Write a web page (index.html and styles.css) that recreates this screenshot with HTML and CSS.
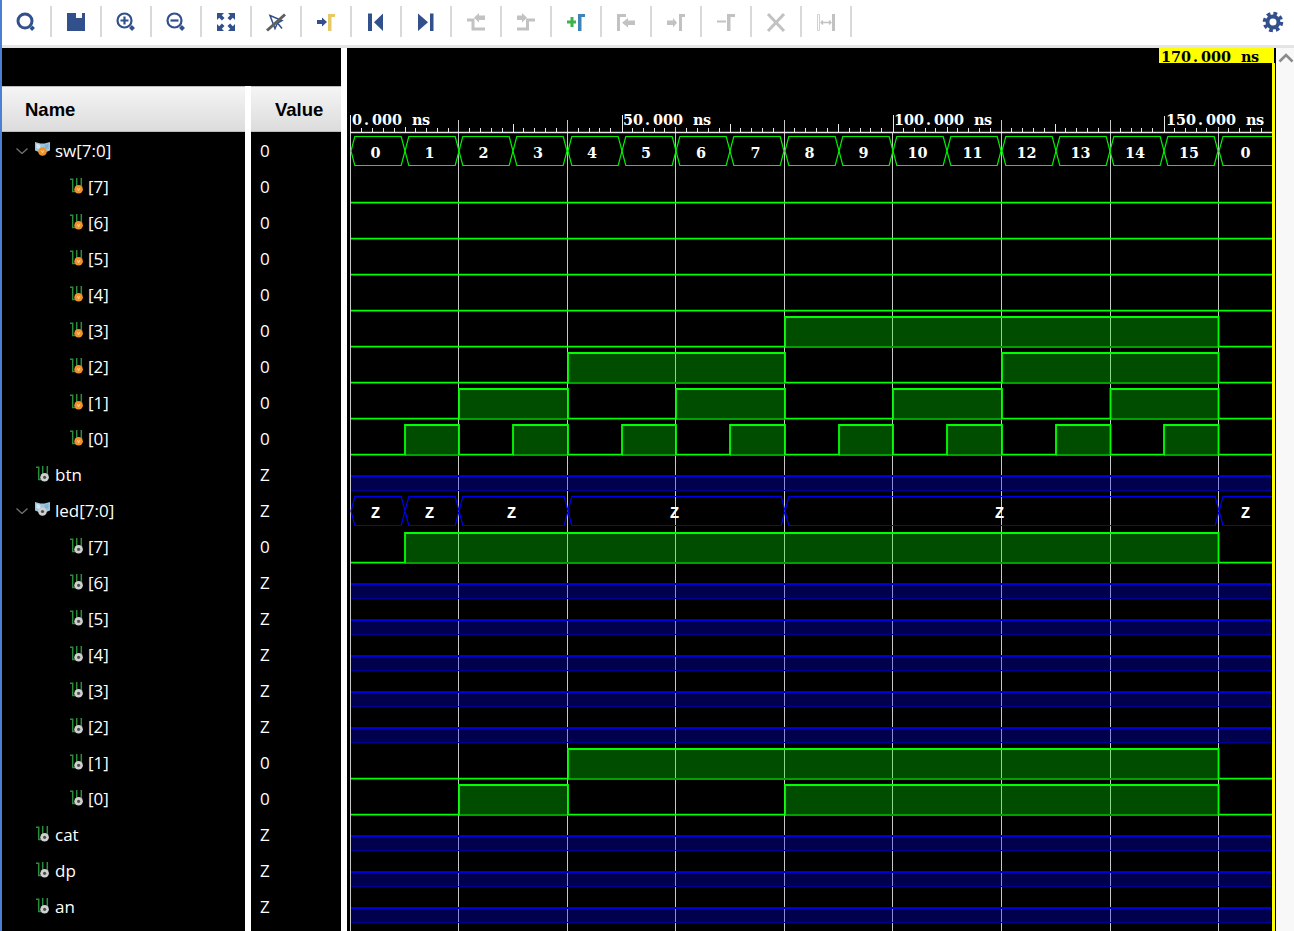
FILE: index.html
```html
<!DOCTYPE html>
<html lang="en">
<head>
<meta charset="utf-8">
<title>Waveform</title>
<link rel="stylesheet" href="styles.css">
</head>
<body>
<svg class="defs" width="0" height="0" aria-hidden="true">
  <symbol id="bit-o" viewBox="0 0 14 16">
    <path class="ic-wire" d="M0 1.200H2.700V13.600H6M6.700 0V10M11.300 0V10"/>
    <circle cx="8.600" cy="11.300" r="4.300" fill="#f0922b"/>
    <path d="M7.400 10.200l1.200 2.300 1.200-2.300" fill="none" stroke="#ffe6b0" stroke-width=".9"/>
  </symbol>
  <symbol id="bit-g" viewBox="0 0 14 16">
    <path class="ic-wire" d="M0 1.200H2.700V13.600H6M6.700 0V10M11.300 0V10"/>
    <circle cx="8.600" cy="11.300" r="4.300" fill="#cfcfcf"/>
    <circle cx="8.600" cy="11.300" r="1.600" fill="#4d4d4d"/>
  </symbol>
  <symbol id="bus-o" viewBox="0 0 16 16">
    <path d="M0 1l5.500 1.500h4L15 1v8.500l-7.500 3-7.500-3z" fill="#9cc6de"/>
    <path d="M1.500 2.800l4 1.200-.5 4.500-3.500-1.500z" fill="#d4e5ef"/>
    <path d="M13.500 2.800l-4 1.200.5 4.500 3.500-1.500z" fill="#7fb3d2"/>
    <circle cx="7.500" cy="10.500" r="4.300" fill="#f0922b"/>
    <path d="M6.300 9.400l1.200 2.300 1.200-2.300" fill="none" stroke="#ffe6b0" stroke-width=".9"/>
  </symbol>
  <symbol id="bus-g" viewBox="0 0 16 16">
    <path d="M0 1l5.500 1.500h4L15 1v8.500l-7.500 3-7.500-3z" fill="#9cc6de"/>
    <path d="M1.500 2.800l4 1.200-.5 4.500-3.500-1.500z" fill="#d4e5ef"/>
    <path d="M13.500 2.800l-4 1.200.5 4.500 3.500-1.500z" fill="#7fb3d2"/>
    <circle cx="7.500" cy="10.500" r="4.300" fill="#cfcfcf"/>
    <circle cx="7.500" cy="10.500" r="1.600" fill="#4d4d4d"/>
  </symbol>
  <symbol id="chev" viewBox="0 0 12 6">
    <path d="M.5 .5L6 5.500 11.500 .5" fill="none" stroke="#6e6e6e" stroke-width="1.400"/>
  </symbol>
  <symbol id="hex" viewBox="0 0 54 30" overflow="visible">
    <path d="M0 15L3.800 .5H50.200L54 15 50.200 29.500H3.800Z"/>
  </symbol>
</svg>

<div class="app">
  <header class="toolbar">
    <div class="tool"><svg viewBox="0 0 24 24"><circle class="s-navy w3" cx="11" cy="11" r="7"/><path class="s-navy w4" d="M17 17l2.500 2.500"/></svg></div>
    <div class="tool"><svg viewBox="0 0 24 24"><path class="f-navy" fill-rule="evenodd" d="M3 3H21V21H3ZM12 3V8H18V3Z"/></svg></div>
    <div class="tool"><svg viewBox="0 0 24 24"><circle class="s-navy w2" cx="10.500" cy="10.500" r="7"/><path class="s-navy w2" d="M6.500 10.500H14.500M10.500 6.500V14.500"/><path class="s-navy w4" d="M16.500 16.500l3 3"/></svg></div>
    <div class="tool"><svg viewBox="0 0 24 24"><circle class="s-navy w2" cx="10.500" cy="10.500" r="7"/><path class="s-navy w2" d="M6.500 10.500H14.500"/><path class="s-navy w4" d="M16.500 16.500l3 3"/></svg></div>
    <div class="tool"><svg viewBox="0 0 24 24"><path class="f-navy" d="M3 3H10L7.800 5.200 10.500 7.900 7.900 10.500 5.200 7.800 3 10ZM21 3V10L18.800 7.800 16.100 10.500 13.500 7.900 16.200 5.200 14 3ZM3 21V14L5.200 16.200 7.900 13.500 10.500 16.100 7.800 18.800 10 21ZM21 21H14L16.200 18.800 13.500 16.100 16.100 13.500 18.800 16.200 21 14Z"/></svg></div>
    <div class="tool"><svg viewBox="0 0 24 24"><path class="s-navy w15" d="M6 5.500L18 10.500 13.500 13 11 18.500ZM13.500 13L18 18.500"/><path class="s-slash" d="M3 20.500L21 4.500"/></svg></div>
    <div class="tool"><svg viewBox="0 0 24 24"><path class="f-navy" d="M3 10H8V7.500L13 12 8 16.500V14H3Z"/><path class="f-gold" d="M14 4H21V7H17.500V21H14Z"/></svg></div>
    <div class="tool"><svg viewBox="0 0 24 24"><path class="f-navy" d="M4 3.500H8V21H4ZM19 3.500V21L10 12.300Z"/></svg></div>
    <div class="tool"><svg viewBox="0 0 24 24"><path class="f-navy" d="M4 3.500L14 12.300 4 21ZM16 3.500H19.500V21H16Z"/></svg></div>
    <div class="tool"><svg viewBox="0 0 24 24"><path class="s-grey w3" d="M3 10H9V19H21"/><path class="f-grey" d="M21 5.500V10H15V12.500L10 7.700 15 3V5.500Z"/></svg></div>
    <div class="tool"><svg viewBox="0 0 24 24"><path class="s-grey w3" d="M3 19H13.500V10H21"/><path class="f-grey" d="M3 5.500H8V3L13 7.700 8 12.500V10H3Z"/></svg></div>
    <div class="tool"><svg viewBox="0 0 24 24"><path class="f-green" d="M3 10.500H6.500V7H9.500V10.500H12V13.500H9.500V17H6.500V13.500H3Z"/><path class="f-blue" d="M14 4H21V7H17.500V21H14Z"/></svg></div>
    <div class="tool"><svg viewBox="0 0 24 24"><path class="f-grey" d="M3 4H12V7H6V21H3ZM21 10.500V15H14V17.500L8 12.800 14 8V10.500Z"/></svg></div>
    <div class="tool"><svg viewBox="0 0 24 24"><path class="f-grey" d="M3 10.500H9V8L13 12.800 9 17.500V15H3ZM15 4H21V7H18V21H15Z"/></svg></div>
    <div class="tool"><svg viewBox="0 0 24 24"><path class="f-grey" d="M3 10.500H12V12.500H3ZM13 4H21V7H16.500V21H13Z"/></svg></div>
    <div class="tool"><svg viewBox="0 0 24 24"><path class="s-grey w3" d="M4 4L20 21M20 4L4 21"/></svg></div>
    <div class="tool"><svg viewBox="0 0 24 24"><path class="s-pale" d="M3.500 4.500H5.500V20.500H3.500Z"/><path class="f-grey" d="M18 4H21V21H18Z"/><path class="s-grey w1" d="M7 12.500H17M9 10.500L7 12.500 9 14.500M15 10.500L17 12.500 15 14.500"/></svg></div>
    <div class="gear"><svg viewBox="0 0 24 24"><circle class="s-navy w4" cx="12" cy="12" r="5.500"/><circle class="s-teeth" cx="12" cy="12" r="8.500"/></svg></div>
  </header>

  <main class="main">
    <section class="names">
      <div class="top-strip"></div>
      <div class="col col-name">
        <div class="head">Name</div>
        <div class="rows">
          <div class="row bus"><svg class="chev"><use href="#chev"/></svg><svg class="ic-bus"><use href="#bus-o"/></svg><span>sw[7:0]</span></div>
          <div class="row child"><svg class="ic-bit"><use href="#bit-o"/></svg><span>[7]</span></div>
          <div class="row child"><svg class="ic-bit"><use href="#bit-o"/></svg><span>[6]</span></div>
          <div class="row child"><svg class="ic-bit"><use href="#bit-o"/></svg><span>[5]</span></div>
          <div class="row child"><svg class="ic-bit"><use href="#bit-o"/></svg><span>[4]</span></div>
          <div class="row child"><svg class="ic-bit"><use href="#bit-o"/></svg><span>[3]</span></div>
          <div class="row child"><svg class="ic-bit"><use href="#bit-o"/></svg><span>[2]</span></div>
          <div class="row child"><svg class="ic-bit"><use href="#bit-o"/></svg><span>[1]</span></div>
          <div class="row child"><svg class="ic-bit"><use href="#bit-o"/></svg><span>[0]</span></div>
          <div class="row single"><svg class="ic-bit"><use href="#bit-g"/></svg><span>btn</span></div>
          <div class="row bus"><svg class="chev"><use href="#chev"/></svg><svg class="ic-bus"><use href="#bus-g"/></svg><span>led[7:0]</span></div>
          <div class="row child"><svg class="ic-bit"><use href="#bit-g"/></svg><span>[7]</span></div>
          <div class="row child"><svg class="ic-bit"><use href="#bit-g"/></svg><span>[6]</span></div>
          <div class="row child"><svg class="ic-bit"><use href="#bit-g"/></svg><span>[5]</span></div>
          <div class="row child"><svg class="ic-bit"><use href="#bit-g"/></svg><span>[4]</span></div>
          <div class="row child"><svg class="ic-bit"><use href="#bit-g"/></svg><span>[3]</span></div>
          <div class="row child"><svg class="ic-bit"><use href="#bit-g"/></svg><span>[2]</span></div>
          <div class="row child"><svg class="ic-bit"><use href="#bit-g"/></svg><span>[1]</span></div>
          <div class="row child"><svg class="ic-bit"><use href="#bit-g"/></svg><span>[0]</span></div>
          <div class="row single"><svg class="ic-bit"><use href="#bit-g"/></svg><span>cat</span></div>
          <div class="row single"><svg class="ic-bit"><use href="#bit-g"/></svg><span>dp</span></div>
          <div class="row single"><svg class="ic-bit"><use href="#bit-g"/></svg><span>an</span></div>
        </div>
      </div>
      <div class="col col-value">
        <div class="head head-value">Value</div>
        <div class="rows">
          <div class="row val">0</div><div class="row val">0</div><div class="row val">0</div><div class="row val">0</div><div class="row val">0</div><div class="row val">0</div><div class="row val">0</div><div class="row val">0</div><div class="row val">0</div>
          <div class="row val">Z</div><div class="row val">Z</div><div class="row val">0</div>
          <div class="row val">Z</div><div class="row val">Z</div><div class="row val">Z</div><div class="row val">Z</div><div class="row val">Z</div>
          <div class="row val">0</div><div class="row val">0</div>
          <div class="row val">Z</div><div class="row val">Z</div><div class="row val">Z</div>
        </div>
      </div>
    </section>

    <section class="wave">
      <svg class="canvas" viewBox="347 48 929 883" width="929" height="883">
        <!-- grid -->
        <path class="grid" d="M350.500 132V931M458.500 120V931M567.500 120V931M675.500 127V931M784.500 120V931M892.500 132V931M1001.500 120V931M1110.500 120V931M1218.500 127V931"/>
        <!-- ruler -->
        <path class="rule" d="M350 132.500H1272"/>
        <path class="tick" d="M350.500 115V132M622.500 115V132M893.500 115V132M1164.500 116V132M405.500 127V132M513.500 124V132M730.500 124V132M838.500 124V132M947.500 127V132M1055.500 124V132"/>
        <path class="tick" d="M361.500 128v4M372.500 128v4M383.500 128v4M394.500 128v4M415.500 128v4M426.500 128v4M437.500 128v4M448.500 128v4M469.500 128v4M480.500 128v4M491.500 128v4M502.500 128v4M523.500 128v4M534.500 128v4M545.500 128v4M556.500 128v4M578.500 128v4M589.500 128v4M599.500 128v4M610.500 128v4M632.500 128v4M643.500 128v4M654.500 128v4M664.500 128v4M686.500 128v4M697.500 128v4M708.500 128v4M719.500 128v4M740.500 128v4M751.500 128v4M762.500 128v4M773.500 128v4M794.500 128v4M805.500 128v4M816.500 128v4M827.500 128v4M849.500 128v4M860.500 128v4M870.500 128v4M881.500 128v4M903.500 128v4M914.500 128v4M925.500 128v4M935.500 128v4M957.500 128v4M968.500 128v4M979.500 128v4M990.500 128v4M1011.500 128v4M1022.500 128v4M1033.500 128v4M1044.500 128v4M1065.500 128v4M1076.500 128v4M1087.500 128v4M1098.500 128v4M1120.500 128v4M1131.500 128v4M1141.500 128v4M1152.500 128v4M1174.500 128v4M1185.500 128v4M1196.500 128v4M1206.500 128v4M1228.500 128v4M1239.500 128v4M1250.500 128v4M1261.500 128v4"/>
        <text class="time" y="125" x="352 364 372 382 392 402 412 422">0.000 ns</text>
        <text class="time" y="125" x="623 633 645 653 663 673 683 693 703">50.000 ns</text>
        <text class="time" y="125" x="894 904 914 926 934 944 954 964 974 984">100.000 ns</text>
        <text class="time" y="125" x="1166 1176 1186 1198 1206 1216 1226 1236 1246 1256">150.000 ns</text>

        <!-- sw bus -->
        <g class="hex-g">
          <use href="#hex" x="351" y="136" width="54" height="30"/><use href="#hex" x="405" y="136" width="54" height="30"/><use href="#hex" x="459" y="136" width="54" height="30"/><use href="#hex" x="513" y="136" width="54" height="30"/>
          <use href="#hex" x="568" y="136" width="54" height="30"/><use href="#hex" x="622" y="136" width="54" height="30"/><use href="#hex" x="676" y="136" width="54" height="30"/><use href="#hex" x="730" y="136" width="54" height="30"/>
          <use href="#hex" x="785" y="136" width="54" height="30"/><use href="#hex" x="839" y="136" width="54" height="30"/><use href="#hex" x="893" y="136" width="54" height="30"/><use href="#hex" x="947" y="136" width="54" height="30"/>
          <use href="#hex" x="1002" y="136" width="54" height="30"/><use href="#hex" x="1056" y="136" width="54" height="30"/><use href="#hex" x="1110" y="136" width="54" height="30"/><use href="#hex" x="1164" y="136" width="54" height="30"/>
          <path d="M1272 136.500H1223L1219 151 1223 165.500H1272"/>
        </g>
        <g class="bus-t">
          <text x="375.500" y="158">0</text><text x="429.500" y="158">1</text><text x="483.500" y="158">2</text><text x="538" y="158">3</text><text x="592" y="158">4</text><text x="646" y="158">5</text><text x="701" y="158">6</text><text x="755.500" y="158">7</text><text x="809.500" y="158">8</text><text x="863.500" y="158">9</text><text x="917.500" y="158">10</text><text x="972.500" y="158">11</text><text x="1026.500" y="158">12</text><text x="1080.500" y="158">13</text><text x="1135" y="158">14</text><text x="1189" y="158">15</text><text x="1245.500" y="158">0</text>
        </g>

        <!-- high fill -->
        <path class="hi" d="M785 316H1218.500V346H785ZM568 352H785V382H568ZM1002 352H1218.500V382H1002ZM459 388H568V418H459ZM676 388H785V418H676ZM893 388H1002V418H893ZM1110.500 388H1218.500V418H1110.500ZM405 424H459V454H405ZM513 424H568V454H513ZM622 424H676V454H622ZM730 424H785V454H730ZM839 424H893V454H839ZM947 424H1002V454H947ZM1056 424H1110.500V454H1056ZM1164 424H1218.500V454H1164ZM405 532H1218.500V562H405ZM568 748H1218.500V778H568ZM459 784H568V814H459ZM785 784H1218.500V814H785Z"/>
        <!-- bottom edges of high levels -->
        <path class="hi-b" d="M785 347H1218.500M568 383H785M1002 383H1218.500M459 419H568M676 419H785M893 419H1002M1110.500 419H1218.500M405 455H459M513 455H568M622 455H676M730 455H785M839 455H893M947 455H1002M1056 455H1110.500M1164 455H1218.500M405 563H1218.500M568 779H1218.500M459 815H568M785 815H1218.500"/>
        <!-- bit levels -->
        <path class="lvl" d="M351 202.700H1272M351 238.700H1272M351 274.700H1272M351 310.700H1272
          M351 346.700H785V317H1218.500V346.700H1272
          M351 382.700H568V353H785V382.700H1002V353H1218.500V382.700H1272
          M351 418.700H459V389H568V418.700H676V389H785V418.700H893V389H1002V418.700H1110.500V389H1218.500V418.700H1272
          M351 454.700H405V425H459V454.700H513V425H568V454.700H622V425H676V454.700H730V425H785V454.700H839V425H893V454.700H947V425H1002V454.700H1056V425H1110.500V454.700H1164V425H1218.500V454.700H1272
          M351 562.700H405V533H1218.500V562.700H1272
          M351 778.700H568V749H1218.500V778.700H1272
          M351 814.700H459V785H568V814.700H785V785H1218.500V814.700H1272"/>
        <!-- hi-Z bands -->
        <path class="z" d="M351 476H1271V491H351ZM351 584H1271V599H351ZM351 620H1271V635H351ZM351 656H1271V671H351ZM351 692H1271V707H351ZM351 728H1271V743H351ZM351 836H1271V851H351ZM351 872H1271V887H351ZM351 908H1271V923H351Z"/>
        <path class="z-t" d="M351 476H1271M351 584H1271M351 620H1271M351 656H1271M351 692H1271M351 728H1271M351 836H1271M351 872H1271M351 908H1271"/>
        <path class="z-b" d="M351 490.500H1271M351 598.500H1271M351 634.500H1271M351 670.500H1271M351 706.500H1271M351 742.500H1271M351 850.500H1271M351 886.500H1271M351 922.500H1271"/>

        <!-- led bus -->
        <path class="hex-b" d="M351 511L354.800 496.500H401.200L405 511 401.200 525.500H354.800ZM405 511L408.800 496.500H455.200L459 511 455.200 525.500H408.800ZM459 511L462.800 496.500H564.200L568 511 564.200 525.500H462.800ZM568 511L571.800 496.500H781.200L785 511 781.200 525.500H571.800ZM785 511L788.800 496.500H1215.200L1219 511 1215.200 525.500H788.800ZM1272 496.500H1223L1219 511 1223 525.500H1272"/>
        <g class="bus-z">
          <text x="375.500" y="518">Z</text><text x="429.500" y="518">Z</text><text x="511.500" y="518">Z</text><text x="674.500" y="518">Z</text><text x="999.500" y="518">Z</text><text x="1245.500" y="518">Z</text>
        </g>

        <!-- cursor -->
        <rect class="cursor" x="1272" y="63" width="3" height="868"/>
        <rect class="cursor" x="1159" y="48" width="115" height="15"/>
        <text class="time time-dark" y="62" x="1161 1171 1181 1193 1201 1211 1221 1231 1241 1251">170.000 ns</text>
      </svg>
    </section>

    <aside class="scroller"><svg viewBox="0 0 16 10"><path d="M1.500 8.500L8 2l6.500 6.500" fill="none" stroke="#8a8a8a" stroke-width="2.600"/></svg></aside>
  </main>
</div>
</body>
</html>
```
FILE: styles.css
```css
* { box-sizing: border-box; }
html, body { margin: 0; padding: 0; height: 931px; overflow: hidden; background: #fff; }
.defs { position: absolute; }

.app {
  width: 1294px;
  height: 931px;
  display: flex;
  flex-direction: column;
  border-left: 2px solid #4a7fd4;
}

.toolbar {
  height: 48px;
  flex: none;
  display: flex;
  align-items: flex-start;
  background: #fff;
  border-bottom: 3px solid #e4e4e4;
}
.tool {
  width: 50px;
  height: 45px;
  flex: none;
  position: relative;
  display: flex;
  align-items: center;
  justify-content: center;
  padding-right: 2px;
}
.tool::after {
  content: "";
  position: absolute;
  right: 0;
  top: 6px;
  width: 2px;
  height: 31px;
  background: #d9d9d9;
}
.tool svg { width: 24px; height: 24px; margin-top: -2px; }
.gear { margin-left: 409px; width: 24px; height: 24px; margin-top: 10px; }
.gear svg { width: 24px; height: 24px; display: block; }

.f-navy { fill: #31508c; }
.f-gold { fill: #e6c867; }
.f-grey { fill: #c2c2c2; }
.f-green { fill: #3cb44b; }
.f-blue { fill: #3f84b9; }
.s-navy, .s-grey, .s-slash, .s-teeth, .s-pale { fill: none; }
.s-navy { stroke: #31508c; }
.s-grey { stroke: #c2c2c2; }
.s-pale { stroke: #d2d2d2; stroke-width: 1; }
.s-slash { stroke: #5f5f5f; stroke-width: 3; }
.s-teeth { stroke: #31508c; stroke-width: 3.5; stroke-dasharray: 3.7 3; }
.w1 { stroke-width: 1.3; }
.w15 { stroke-width: 1.5; }
.w2 { stroke-width: 2.2; }
.w3 { stroke-width: 3; }
.w4 { stroke-width: 4; }

.main {
  flex: 1;
  min-height: 0;
  display: flex;
}

.names {
  width: 339px;
  flex: none;
  display: grid;
  grid-template-columns: 243px 90px;
  grid-template-rows: 38px 1fr;
  column-gap: 6px;
}
.top-strip { grid-column: 1 / 3; background: #000; }
.col { background: #000; overflow: hidden; }

.head {
  height: 46px;
  padding: 2px 0 0 23px;
  display: flex;
  align-items: center;
  font: bold 18.5px "Liberation Sans", Arial, sans-serif;
  color: #000;
  background: linear-gradient(#f5f5f5, #dcdcdc);
  border: 1px solid #bdbdbd;
  border-width: 1px 0 1px 0;
}
.head-value { padding-left: 24px; }

.row {
  height: 36px;
  display: flex;
  align-items: center;
  font: 17px "Open Sans", "Noto Sans", sans-serif;
  color: #fff;
}
.bus { padding-left: 14px; }
.single { padding-left: 34px; }
.child { padding-left: 68px; }
.val { padding-left: 9px; }

.chev { width: 12px; height: 6px; margin: 2px 7px 0 0; flex: none; }
.ic-bus { width: 16px; height: 16px; margin: -2px 4px 0 0; flex: none; }
.ic-bit { width: 14px; height: 16px; margin: 0 4px 0 0; flex: none; }
.single .ic-bit { margin-right: 5px; }
.ic-wire { fill: none; stroke: #2b8c3c; stroke-width: 1.5; }

.wave {
  width: 929px;
  flex: none;
  margin-left: 6px;
  background: #000;
}
.canvas { display: block; }

.grid { stroke: #c8c8c8; stroke-width: 1; fill: none; }
.rule { stroke: #e8e8e8; stroke-width: 1.4; fill: none; }
.tick { stroke: #e8e8e8; stroke-width: 1; fill: none; }
.time {
  font: bold 14.4px "DejaVu Serif", "Liberation Serif", serif;
  fill: #fff;
}
.time-dark { fill: #000; }
.bus-t text {
  font: bold 14.4px "DejaVu Serif", "Liberation Serif", serif;
  fill: #fff;
  text-anchor: middle;
}
.bus-z text {
  font: bold 16px "Liberation Mono", monospace;
  fill: #fff;
  text-anchor: middle;
}

.hex-g, .hex-g path { fill: none; stroke: #00f000; stroke-width: 1.2; }
.hex-b { fill: none; stroke: #0000f0; stroke-width: 1.2; }
.hi { fill: rgba(0, 255, 0, 0.3); }
.hi-b { fill: none; stroke: #00a000; stroke-width: 2; }
.lvl { fill: none; stroke: #00ff00; stroke-width: 1.8; }
.z { fill: rgba(0, 0, 255, 0.3); }
.z-t { fill: none; stroke: #0000d8; stroke-width: 2; }
.z-b { fill: none; stroke: #000098; stroke-width: 1; }
.cursor { fill: #ffff00; }

.scroller {
  flex: none;
  width: 18px;
  background: #f8f8f8;
}
.scroller svg { display: block; width: 16px; height: 10px; margin: 5px 0 0 2px; }
```
